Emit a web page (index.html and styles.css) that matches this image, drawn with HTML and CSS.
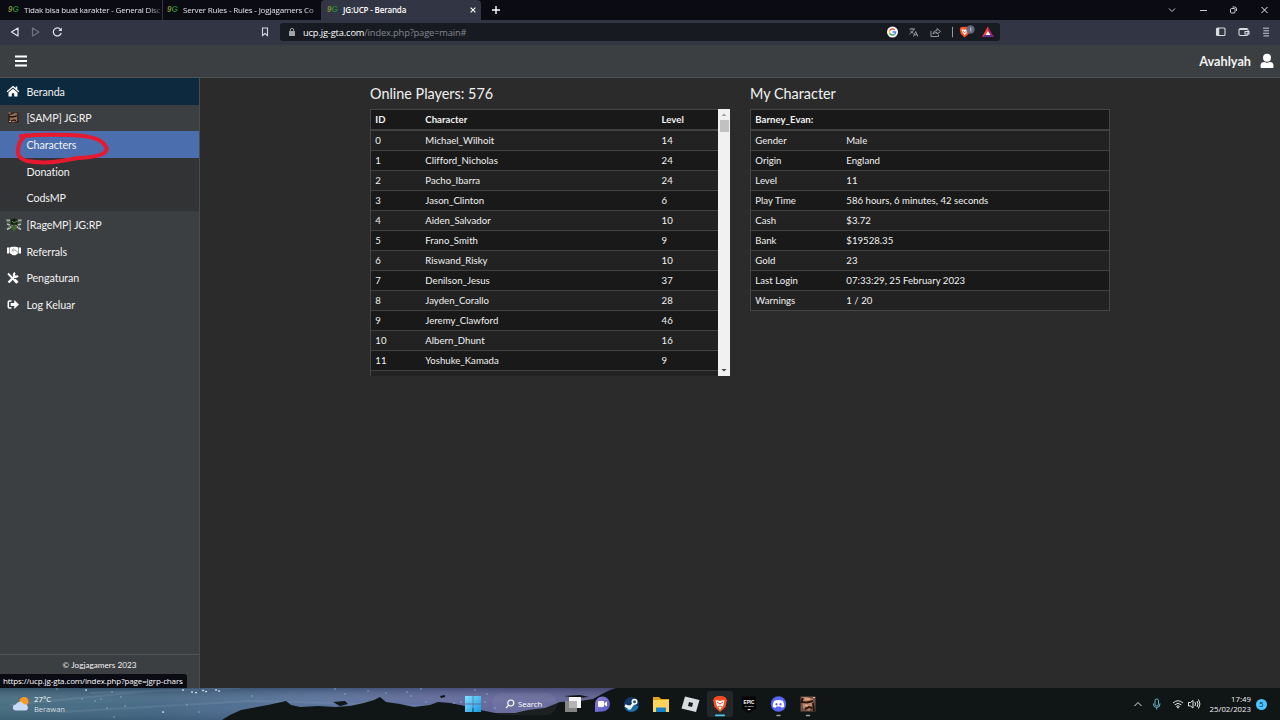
FILE: index.html
```html
<!DOCTYPE html>
<html lang="id">
<head>
<meta charset="utf-8">
<title>JG:UCP - Beranda</title>
<link rel="stylesheet" href="styles.css">
</head>
<body>
<div class="screen">
  <div class="tabs">
    <div class="tab"><span class="fav">9G</span><span class="tab-text fade">Tidak bisa buat karakter - General Disc</span></div>
    <div class="tab second"><span class="fav">9G</span><span class="tab-text fade">Server Rules - Rules - Jogjagamers Co</span></div>
    <div class="tab active"><span class="fav">9G</span><span class="tab-text">JG:UCP - Beranda</span>
      <svg class="close" width="6" height="6" viewBox="0 0 6 6"><path d="M.6.6l4.8 4.8M5.4.6L.6 5.4" stroke="#fff" stroke-width="1.1"/></svg></div>
    <svg class="plus" width="8" height="8" viewBox="0 0 8 8"><path d="M4 0v8M0 4h8" stroke="#fff" stroke-width="1.4"/></svg>
    <svg class="win" width="108" height="12" viewBox="0 0 108 12" fill="none" stroke="#ccc" stroke-width="1"><path d="M2 4.500l3 3 3-3"/><path d="M33 6.500h7"/><rect x="63.500" y="4.500" width="4.500" height="4.500" rx="1"/><path d="M65.500 3h2q2 0 2 2v2"/><path d="M94.500 3l6 6M100.500 3l-6 6" stroke="#eee"/></svg>
  </div>
  <div class="toolbar">
    <svg class="nav" width="72" height="14" viewBox="0 0 72 14" fill="none" stroke="#e4e4ec" stroke-width="1.2"><path d="M18 3v8l-6.500-4z" stroke-linejoin="round"/><path d="M32.500 3v8l6.500-4z" stroke="#717380" stroke-linejoin="round"/><path d="M60.500 4.500a4 4 0 1 0 .7 3.500"/><path d="M61.800 2.500v3.500h-3.500z" fill="#e4e4ec" stroke="none"/></svg>
    <svg class="bookmark" width="8" height="10" viewBox="0 0 8 10"><path d="M1.500 1h5v7.500L4 6.500 1.500 8.500z" fill="none" stroke="#d7d7df" stroke-width="1.100"/></svg>
    <div class="address">
      <svg width="6" height="8" viewBox="0 0 6 8"><rect y="3" width="6" height="5" rx=".6" fill="#a3a4a8"/><path d="M1.300 3V2a1.700 1.600 0 0 1 3.400 0v1" fill="none" stroke="#a3a4a8"/></svg>
      <span class="url"><span class="host">ucp.jg-gta.com</span>/index.php?page=main#</span>
      <svg class="addr-icons" width="108" height="14" viewBox="0 0 108 14" fill="none">
        <circle cx="6.500" cy="7" r="5.500" fill="#fff"/><path d="M8.800 4.800A3.200 3.200 0 0 0 3.700 5.600" stroke="#ea4335" stroke-width="1.400"/><path d="M3.700 5.600a3.200 3.200 0 0 0 0 2.800" stroke="#fbbc05" stroke-width="1.400"/><path d="M3.700 8.400a3.200 3.200 0 0 0 4.800 1" stroke="#34a853" stroke-width="1.400"/><path d="M6.500 7h3.200q0 1.500-1.200 2.400" stroke="#4285f4" stroke-width="1.300"/>
        <g stroke="#a4a5aa" stroke-width=".9"><path d="M23.500 4h5.500M26 3v1M28 4q-.8 3-4.500 5M24.500 5.500q1 2 3 3M27.500 11.500l2.200-5 2.200 5M28.300 9.800h2.900"/><path d="M45 6v5.500h7.500V9.500M47 9q.3-3.500 4-3.500V3.500L54.500 6.500 51 9V7.500q-2.500 0-4 1.500z"/><path d="M66.500 1.800v10.500"/></g>
        <g transform="translate(-1.500 0)"><path d="M76.500 2l6-.2 2.500 2-.8 5-4 3.700-4-3.700-.9-5z" fill="#fb542b"/><path d="M77 4.300l3.200.5 3.200-.5-1 3-2.200 3-2.200-3z" fill="#fff"/><path d="M78.500 6l1.700 2 1.700-2" stroke="#fb542b" stroke-width=".8"/><circle cx="86" cy="4.500" r="4.200" fill="#62687c"/><path d="M85.400 3.600l.9-.7v3.500" stroke="#ddd" stroke-width=".8"/></g>
        <path d="M102 1.500L96 12h12z" fill="#9e1f63"/><path d="M102 1.500L96 12l6-4z" fill="#ff4724"/><path d="M96 12h12l-6-4z" fill="#662d91"/><path d="M102 6l-2.500 4h5z" fill="#fff"/>
      </svg>
    </div>
    <svg class="right-icons" width="56" height="12" viewBox="0 0 56 12" fill="none" stroke="#dadae1" stroke-width="1.100"><rect x="1.500" y="2" width="8.500" height="7.500" rx="1"/><path d="M3 2v7.500" stroke-width="2.500"/><rect x="24" y="2.500" width="9" height="7" rx="1.500"/><path d="M24 3.500h8M30 5.500h4v2.500h-4z"/><path d="M48 2.200h6M48.500 4.800h5.500M48 7.300h6M48.500 9.900h5.500" stroke-width=".9"/></svg>
  </div>
  <header class="site-head">
    <svg width="12" height="12" viewBox="0 0 12 12"><path d="M0 1.500h12M0 6h12M0 10.500h12" stroke="#fff" stroke-width="2"/></svg>
    <div class="user"><span>Avahlyah</span><svg width="14" height="16" viewBox="0 0 14 16" fill="#fff"><circle cx="7" cy="4.700" r="4"/><path d="M.5 13q0-4 3.800-4 2.700 1.500 5.400 0 3.800 0 3.800 4v1q0 1-1 1h-11q-1 0-1-1z"/></svg></div>
  </header>
  <div class="body">
    <aside class="side">
      <nav>
        <a class="item home"><svg width="14" height="12" viewBox="0 0 14 12" fill="#fff"><path d="M7 .8L.7 6.300l.8.9L7 2.500l5.500 4.700.8-.9-2-1.700V1.500H9.700v1.600z"/><path d="M7 3.700L2.500 7.500V11.500h3.300V8.300h2.400v3.200h3.300v-4z"/></svg>Beranda</a>
        <a class="item"><svg width="14" height="12" viewBox="0 0 14 12"><rect x="2" y=".5" width="10.500" height="10.500" fill="#33251f"/><path d="M3.500 3l5-1 2.500 2v5l-4 1.500-3-2z" fill="#9b7059"/><path d="M3 4.500l3.500.5 4-1M5 9l3-1 2 .7" stroke="#20120d" stroke-width="1.300" fill="none"/><path d="M2.500 1h2M8 2h3M3 9.500h2" stroke="#d2aa91"/></svg>[SAMP] JG:RP</a>
        <div class="sub">
          <a class="item current">Characters</a>
          <a class="item">Donation</a>
          <a class="item">CodsMP</a>
        </div>
        <a class="item"><svg class="wide" width="18" height="14" viewBox="0 0 18 14"><path d="M1 1.500h6v2H2zM11 1.500h6l-1 2h-5z" fill="#aaaaa6"/><path d="M2 11.500l6-4M16 11.500l-6-4M2 6l3 1M16 6l-3 1" stroke="#b9b9b9" stroke-width="1.800"/><path d="M5 1.500l4-1 4 1-1 5H6z" fill="#182016"/><path d="M1 4h5M12 4h5M3 8.500l2 1M15 8.500l-2 1" stroke="#43713a"/><path d="M5.500 7.500h7L9 14z" fill="#3f642f"/><path d="M7 3l2 2 3-2" stroke="#638d4b" fill="none"/></svg>[RageMP] JG:RP</a>
        <a class="item"><svg class="deal" width="16" height="12" viewBox="0 0 16 12" fill="#fff"><path d="M1 2.500h2v6H1zM13 2.500h2v6h-2z"/><path d="M3.500 2.500l3-.8h3l3 .8v5.500l-3 2.200H7L3.500 8z"/><path d="M8 3.200L6 5.500l1.500.4L9 4.800l3 2.700" fill="none" stroke="#777b7e" stroke-width=".8"/></svg>Referrals</a>
        <a class="item"><svg width="14" height="12" viewBox="0 0 14 12" fill="none" stroke="#fff"><path d="M2 1.500l8.500 8.800" stroke-width="1.800"/><path d="M8.500 7.800l3 3" stroke-width="3"/><path d="M9.500 3.500l-7 7" stroke-width="2.400"/><path d="M9 .8Q7 2.500 8.300 4.200q1.700 1.500 3.700-.5" stroke-width="2"/></svg>Pengaturan</a>
        <a class="item"><svg width="14" height="12" viewBox="0 0 14 12"><path d="M5.500 2H3.300Q2.300 2 2.300 3v5q0 1 1 1h2.200" fill="none" stroke="#fff" stroke-width="1.500"/><path d="M4.700 4h3.500V1l4.800 4.500L8.200 10V7H4.700z" fill="#fff"/></svg>Log Keluar</a>
      </nav>
      <footer>© Jogjagamers 2023</footer>
    </aside>
    <main class="content">
      <section class="panel">
        <h2>Online Players: 576</h2>
        <div class="scrollbox">
          <div class="table players">
            <div class="row head"><span>ID</span><span>Character</span><span>Level</span></div>
            <div class="row"><span>0</span><span>Michael_Wilhoit</span><span>14</span></div>
            <div class="row"><span>1</span><span>Clifford_Nicholas</span><span>24</span></div>
            <div class="row"><span>2</span><span>Pacho_Ibarra</span><span>24</span></div>
            <div class="row"><span>3</span><span>Jason_Clinton</span><span>6</span></div>
            <div class="row"><span>4</span><span>Aiden_Salvador</span><span>10</span></div>
            <div class="row"><span>5</span><span>Frano_Smith</span><span>9</span></div>
            <div class="row"><span>6</span><span>Riswand_Risky</span><span>10</span></div>
            <div class="row"><span>7</span><span>Denilson_Jesus</span><span>37</span></div>
            <div class="row"><span>8</span><span>Jayden_Corallo</span><span>28</span></div>
            <div class="row"><span>9</span><span>Jeremy_Clawford</span><span>46</span></div>
            <div class="row"><span>10</span><span>Albern_Dhunt</span><span>16</span></div>
            <div class="row"><span>11</span><span>Yoshuke_Kamada</span><span>9</span></div>
            <div class="row"></div>
          </div>
          <div class="bar">
            <svg width="12" height="11" viewBox="0 0 12 11"><path d="M6 4.500L3.500 7h5z" fill="#a0a0a0"/></svg>
            <div class="thumb"></div>
            <svg width="12" height="11" viewBox="0 0 12 11"><path d="M6 6.500L3.500 4h5z" fill="#444"/></svg>
          </div>
        </div>
      </section>
      <section class="panel">
        <h2>My Character</h2>
        <div class="table stats">
          <div class="row head"><span>Barney_Evan:</span></div>
          <div class="row"><span>Gender</span><span>Male</span></div>
          <div class="row"><span>Origin</span><span>England</span></div>
          <div class="row"><span>Level</span><span>11</span></div>
          <div class="row"><span>Play Time</span><span>586 hours, 6 minutes, 42 seconds</span></div>
          <div class="row"><span>Cash</span><span>$3.72</span></div>
          <div class="row"><span>Bank</span><span>$19528.35</span></div>
          <div class="row"><span>Gold</span><span>23</span></div>
          <div class="row"><span>Last Login</span><span>07:33:29, 25 February 2023</span></div>
          <div class="row"><span>Warnings</span><span>1 / 20</span></div>
        </div>
      </section>
    </main>
  </div>
  <div class="taskbar">
    <svg class="scene" width="1280" height="32" viewBox="0 0 1280 32">
      <defs><linearGradient id="sky"><stop offset="0" stop-color="#426a7c"/><stop offset=".25" stop-color="#426684"/><stop offset=".5" stop-color="#56709a"/><stop offset=".75" stop-color="#60659a"/><stop offset="1" stop-color="#5a598c"/></linearGradient>
      <linearGradient id="shade" x2="0" y2="1"><stop offset="0" stop-color="#101a30" stop-opacity=".3"/><stop offset=".5" stop-color="#fff" stop-opacity=".04"/><stop offset="1" stop-color="#101a30" stop-opacity=".12"/></linearGradient></defs>
      <rect width="1280" height="32" fill="#101516"/>
      <rect width="640" height="32" fill="url(#sky)"/><rect width="640" height="32" fill="url(#shade)"/>
      <path d="M60 24L250 13 430 18M90 5L240 0M10 17L150 3" stroke="#b4c7dc" stroke-opacity=".12" stroke-width="2" fill="none"/>
      <path d="M222 32L230 27 241 22 268 17 286 13 291 17 300 19 318 18 335 19 350 18 364 15 374 12 380 9 386 14 400 16 414 19 430 17 438 14 450 15 465 18 480 22 495 25 515 25 528 22 545 20 560 14 580 13 593 11 602 6 610 2 616 0H642V32z" fill="#101516"/>
      <path d="M333 14l12-1 3 3-8 2zM440 8l5-1v2l-4 1zM564 8l16-1 9 2-12 1z" fill="#101516"/>
      <g fill="none" stroke-linecap="round"><path d="M86 2h.1M192 4h.1M196 4.500h.1M203 2.500h.1M206 3.500h.1M216 2h.1M219 3h.1M163 24h.1M183 2h.1" stroke="#eefcff" stroke-width="1.700"/><path d="M57 1h.1M82 11h.1M95 13h.1M101 11h.1M112 4h.1M121 9h.1M125 18h.1M114 29h.1M107 20h.1M187 17h.1M199 24h.1M252 8h.1M335 1h.1M345 6h.1M368 3h.1M386 5h.1M407 4h.1M411 8h.1M426 14h.1M421 1h.1M454 15h.1M461 14h.1M475 2h.1M487 6h.1M485 14h.1M495 20h.1" stroke="#82d4d6" stroke-opacity=".8" stroke-width="1.400"/></g>
    </svg>
    <div class="weather">
      <svg width="18" height="16" viewBox="0 0 18 16"><circle cx="12" cy="5.500" r="4.500" fill="#f79a24"/><path d="M4 14.500a3 3 0 0 1-.2-6A4.500 4.500 0 0 1 12 8.300a3.100 3.100 0 0 1 1.500 6.200z" fill="#c8daf8"/></svg>
      <div><p>27°C</p><p class="dim">Berawan</p></div>
    </div>
    <div class="apps">
      <svg class="start" width="16" height="16" viewBox="0 0 16 16"><defs><linearGradient id="st" x2="1" y2="1"><stop stop-color="#82e0ff"/><stop offset="1" stop-color="#179ae3"/></linearGradient></defs><path d="M0 0h7.600v7.600H0zM8.400 0H16v7.600H8.400zM0 8.400h7.600V16H0zM8.400 8.400H16V16H8.400z" fill="url(#st)"/></svg>
      <div class="search"><svg width="10" height="10" viewBox="0 0 10 10" fill="none" stroke="#fff" stroke-width="1.200"><circle cx="5.800" cy="4" r="3"/><path d="M3.700 6.200L1 9"/></svg>Search</div>
      <svg class="icons" width="266" height="32" viewBox="0 0 266 32">
        <defs><linearGradient id="ch" x2="1" y2="1"><stop stop-color="#8f82d8"/><stop offset="1" stop-color="#5455c4"/></linearGradient></defs>
        <rect x="13" y="9" width="12" height="11" fill="#f4f4f4"/><rect x="9" y="13" width="12" height="11" fill="#858585"/><path d="M13 13h8v7h-8z" fill="#b4b4b4"/>
        <path d="M39 24V16a7.500 7.500 0 1 1 7.500 7.500z" fill="url(#ch)"/><rect x="42" y="13" width="6" height="6" rx="1" fill="#fff"/><path d="M48.500 15l2.500-1.500v5L48.500 17z" fill="#fff"/>
        <circle cx="75.500" cy="16.500" r="7.500" fill="#13396b"/><path d="M68.500 19.500a7.500 7.500 0 0 0 14-1l-4-2-3 2z" fill="#1b70a8"/><path d="M69 17.500l5 2.200 4-4.700" stroke="#fff" stroke-width="2.500" fill="none"/><circle cx="78.500" cy="13.700" r="3" fill="#fff"/><circle cx="78.500" cy="13.700" r="1.500" fill="#245589"/><circle cx="73.500" cy="19.500" r="2.200" fill="#eee"/>
        <path d="M97 9h6l2 2h8v13H97z" fill="#e5a51b"/><path d="M97 12h16v12H97z" fill="#ffd45c"/><path d="M100 19.500h10V24h-10z" fill="#1680ca"/>
        <g transform="translate(1.500 0)"><path d="M127.500 8.500L142 12 138.500 24 124 20.500z" fill="#d9dde0"/><path d="M131.500 14l4 1-1 4-4-1z" fill="#171b1d"/></g>
        <g transform="translate(4 0)">
        <rect x="147" y="3" width="26" height="26" rx="3" fill="#222729"/><path d="M155 9l3-1h4l3 1 2 3-1.500 7-5.500 5-5.500-5-1.500-7z" fill="#f54d21"/><path d="M155.500 12l4.500 1 4.500-1-1 5-3.500 5-3.500-5z" fill="#fff"/><path d="M157 14l3 2 3-2M158 19l2-1 2 1" stroke="#f54d21" stroke-width="1" fill="none"/><rect x="155" y="26.500" width="10" height="1.700" rx=".8" fill="#4cc2ed"/>
        <path d="M182 8.500h14v12L189 25l-7-4.500z" fill="#050505"/><text x="189" y="15.500" class="epic" textLength="11" lengthAdjust="spacingAndGlyphs">EPIC</text><text x="189" y="19" class="games">GAMES</text><path d="M187 21h4l-2 1.500z" fill="#ddd"/>
        <circle cx="218.500" cy="16" r="7.700" fill="#5865f2"/><path d="M214 13q4.500-2 9 0 1.500 3 1.200 6l-2.700.8-1-1.300h-4l-1 1.300-2.700-.8q-.3-3 1.200-6z" fill="#fff"/><ellipse cx="216.500" cy="16.300" rx="1" ry="1.200" fill="#5865f2"/><ellipse cx="220.500" cy="16.300" rx="1" ry="1.200" fill="#5865f2"/><path d="M217 27.500h3M246.500 27.500h3" stroke="#9b9d9e" stroke-width="1.500" stroke-linecap="round"/>
        <rect x="240.500" y="8.500" width="15" height="15" fill="#725043"/><path d="M242 9h5l6 2v7l-4 5-6-3z" fill="#bd8668"/><path d="M241 14l6 .5 6-1.500M243 10l-2 5M253 15l1 8M245 21l4-2 3 1" stroke="#27150f" stroke-width="2" fill="none"/><path d="M245 11h5M245 17l3 1M253 9.500h2" stroke="#efc0a0"/>
        </g>
      </svg>
    </div>
    <div class="tray">
      <svg width="70" height="16" viewBox="0 0 70 16" fill="none" stroke="#e5e5e5"><path d="M.5 10L4 6.500 7.500 10"/><g stroke="#67b8cc"><rect x="21" y="3" width="3.500" height="7" rx="1.700"/><path d="M19.300 7.500q0 4 3.400 4t3.400-4M22.700 11.500v2"/></g><path d="M39 7q5-4.500 10 0M40.700 8.800q3.300-3 6.600 0M42.300 10.500q1.700-1.600 3.400 0"/><circle cx="44" cy="11.500" r=".6"/><path d="M54.500 6.500h2l2.500-2v7.500l-2.500-2h-2zM61 6q1 2 0 4M63 5q2 3 0 6M64.500 3.500q3 4.500 0 9"/></svg>
      <div class="clock"><p>17:49</p><p>25/02/2023</p></div>
      <span class="badge">5</span>
    </div>
  </div>
  <div class="status">https://ucp.jg-gta.com/index.php?page=jgrp-chars</div>
  <svg class="scribble" width="100" height="40" viewBox="0 0 100 40"><path d="M6 6Q28 4 55 5Q80 6 87 12Q95 19 89 23Q84 27 63 28L46 31Q30 34 12 31Q2 28 3 21Q3 11 11 5" fill="none" stroke="#e7192f" stroke-width="4" stroke-linecap="round" stroke-linejoin="round"/></svg>
</div>
</body>
</html>
```
FILE: styles.css
```css
* { box-sizing: border-box; }
body { margin: 0; background: #2b2b2b; color: #f2f2f2; overflow: hidden; font-family: Lato, "Open Sans", sans-serif; }
p, h2 { margin: 0; }
svg { flex: none; display: block; }
.screen { width: 1280px; height: 720px; display: flex; flex-direction: column; position: relative; }
.tabs, .toolbar, .taskbar, .status { font-family: "Open Sans", "Noto Sans", sans-serif; }

.tabs { height: 20px; background: #0b0b14; display: flex; align-items: center; flex: none; font-size: 8px; }
.tab { width: 163px; height: 20px; padding: 0 1px 1px 8px; display: flex; align-items: center; gap: 5px; border-right: 1px solid #35353b; color: #e4e4e8; letter-spacing: -.18px; }
.tab.second { width: 158px; padding-left: 4px; border: 0; }
.tab.active { background: #323544; border: 0; border-radius: 4px 4px 0 0; padding: 0 5px 1px 6px; width: 160px; color: #fff; font-weight: 600; letter-spacing: -.16px; }
.fav { width: 11px; flex: none; font: italic bold 8.200px/12px "Liberation Sans", sans-serif; letter-spacing: 0; color: transparent; background: linear-gradient(90deg, #8c8d2f 40%, #198e2c 45%); -webkit-background-clip: text; background-clip: text; }
.tab-text { white-space: nowrap; flex: 1; }
.fade { -webkit-mask-image: linear-gradient(90deg, #000 90%, transparent 103%); mask-image: linear-gradient(90deg, #000 90%, transparent 103%); }
.plus { margin-left: 11px; }
.win { margin-left: auto; margin-right: 5px; }

.toolbar { height: 25px; background: #323544; display: flex; align-items: center; flex: none; padding-bottom: 1px; }
.bookmark { margin-left: 189px; }
.address { margin-left: 11px; width: 720px; height: 18px; background: #171a21; border-radius: 3px; display: flex; align-items: center; padding: 0 6px 0 9px; gap: 8px; font-size: 9.300px; letter-spacing: -.14px; }
.url { color: #85878d; flex: 1; white-space: nowrap; }
.host { color: #fff; }
.right-icons { margin-left: auto; margin-right: 9px; }

.site-head { height: 33px; flex: none; background: #3c3f41; border-bottom: 1px solid #505354; display: flex; align-items: center; justify-content: space-between; padding: 0 6px 0 15px; }
.user { display: flex; align-items: center; gap: 9px; font-weight: 700; font-size: 12.700px; }

.body { flex: 1; display: flex; min-height: 0; }
.side { width: 200px; background: #3c3f41; border-right: 1px solid #4a4d4f; display: flex; flex-direction: column; justify-content: space-between; }
.item { height: 26.670px; display: flex; align-items: center; padding-left: 6px; gap: 6.500px; font-size: 10.700px; letter-spacing: -.08px; white-space: nowrap; }
.item .wide { margin: 0 -3px 0 -1px; }
.item .deal { margin: 0 -2px 0 0; }
.home { background: #0d293e; }
.sub { background: #313335; }
.sub .item { padding-left: 26.500px; }
.sub .current { background: #4b6eaf; }
.side footer { height: 34px; border-top: 1px solid #515355; text-align: center; font-size: 8.200px; line-height: 20px; }

.content { flex: 1; display: flex; justify-content: center; align-items: flex-start; gap: 20px; padding-top: 5px; }
.panel { width: 360px; }
.panel h2 { font-size: 14.400px; line-height: 22px; font-weight: 400; height: 26px; }
.scrollbox { display: flex; height: 267px; overflow: hidden; }
.table { border: 1px solid #454545; font-size: 9.600px; letter-spacing: .02px; }
.players { flex: 1; border-right: 0; border-bottom: 0; height: 290px; }
.row { display: grid; height: 20px; align-items: center; padding-left: 4.300px; background: #191919; border-bottom: 1px solid #424242; line-height: 14px; }
.row:nth-child(even) { background: #222; }
.row:last-child { border-bottom: 0; height: 19px; }
.players .row { grid-template-columns: 50px 236.300px 1fr; }
.stats .row { grid-template-columns: 91px 1fr; }
.row.head { height: 21px; font-weight: 700; border-bottom: 2px solid #424242; }
.bar { width: 12px; background: #f1f1f1; display: flex; flex-direction: column; }
.thumb { width: 9px; height: 12px; margin: 0 auto auto 2px; background: #c1c1c1; }

.taskbar { height: 32px; flex: none; display: grid; grid-template-columns: 465px 1fr auto; align-items: center; position: relative; font-size: 7.800px; }
.scene { position: absolute; left: 0; top: 0; }
.weather, .apps, .tray { position: relative; display: flex; align-items: center; }
.weather { padding-left: 12px; gap: 4px; line-height: 10.500px; color: #fff; }
.dim { color: #d2dbe0; font-size: 7.600px; letter-spacing: -.05px; }
.search { width: 65px; height: 22px; margin-left: 11px; border-radius: 11px; background: rgba(255,255,255,.05); display: flex; align-items: center; gap: 3px; padding-left: 13px; color: #fff; letter-spacing: -.1px; }
.icons { margin-left: -1px; }
.epic { font: bold 6px "Liberation Sans", sans-serif; fill: #fff; text-anchor: middle; }
.games { font: bold 2.500px "Liberation Sans", sans-serif; fill: #ddd; text-anchor: middle; }
.tray { padding-right: 13px; }
.clock { width: 47px; text-align: right; line-height: 10.500px; font-size: 7.800px; white-space: nowrap; display: flex; flex-direction: column; align-items: flex-end; }
.badge { width: 11px; height: 11px; border-radius: 50%; background: #4cc2ff; color: #0a2a3c; font-size: 7.500px; line-height: 11px; text-align: center; margin-left: 5px; }

.status { position: absolute; left: 0; top: 674px; height: 14px; width: 187px; background: #0b0b14; border-radius: 0 3px 0 0; color: #fff; font-size: 8px; letter-spacing: -.12px; line-height: 14px; padding-left: 3px; white-space: nowrap; }
.scribble { position: absolute; left: 15px; top: 130px; }
```
